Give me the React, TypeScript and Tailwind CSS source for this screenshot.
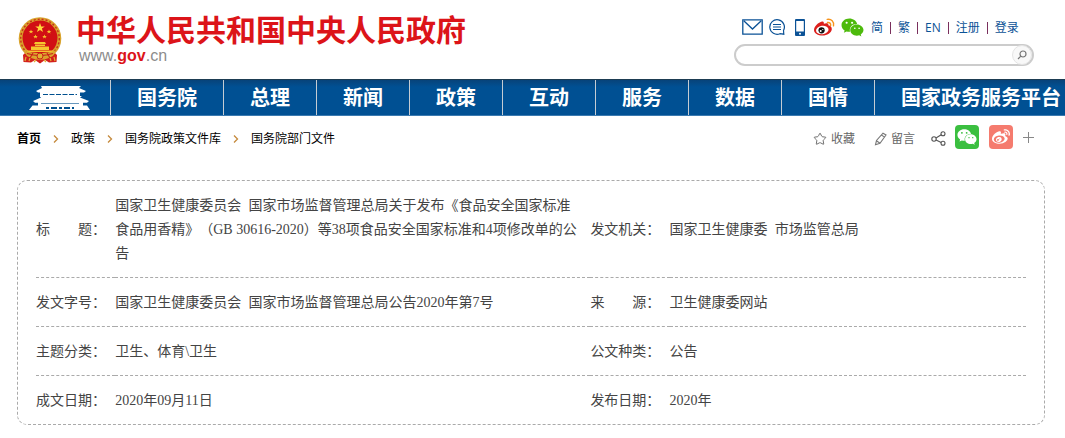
import { FaWeixin, FaWeibo } from "react-icons/fa";
import { Star } from "lucide-react";

const navItems = ["国务院", "总理", "新闻", "政策", "互动", "服务", "数据", "国情", "国家政务服务平台"];

const crumbs = ["首页", "政策", "国务院政策文件库", "国务院部门文件"];

const languageLinks = ["简", "繁", "EN", "注册", "登录"];

const rows = [
  [
    "标　　题：",
    "国家卫生健康委员会 国家市场监督管理总局关于发布《食品安全国家标准 食品用香精》（GB 30616-2020）等38项食品安全国家标准和4项修改单的公告",
    "发文机关：",
    "国家卫生健康委 市场监管总局",
  ],
  ["发文字号：", "国家卫生健康委员会 国家市场监督管理总局公告2020年第7号", "来　　源：", "卫生健康委网站"],
  ["主题分类：", "卫生、体育\\卫生", "公文种类：", "公告"],
  ["成文日期：", "2020年09月11日", "发布日期：", "2020年"],
];

// Digits and Latin runs are half an em wide, and a lone space is kept as wide as a digit
const MixedText = ({ text }: { text: string }) => (
  <>
    {text.split(/([\x20-\x7e]+)/).map((part, i) => {
      if (i % 2 === 0) return part;
      return (
        <span
          key={i}
          className={
            part === " "
              ? "font-['Liberation_Mono',monospace] text-xs leading-none"
              : "font-['Liberation_Serif',serif] leading-none"
          }
        >
          {part}
        </span>
      );
    })}
  </>
);

const Emblem = () => (
  <svg viewBox="0 0 44 47" className="h-[47px] w-11" aria-hidden="true">
    <path d="M9 34 L5 38 L5.500 45 L13 45.500 L17 43 L22 46.500 L27 43 L31 45.500 L38.500 45 L39 38 L35 34Z" fill="#d3201b" />
    <circle cx="22" cy="21.5" r="21.300" fill="#d9a32c" />
    <circle cx="22" cy="21.5" r="19.300" fill="none" stroke="#c8321c" strokeWidth="1.4" strokeDasharray="2 2" />
    <circle cx="22" cy="21" r="17.500" fill="#d10f14" />
    <path d="M22 6l1.2 3.4h3.6l-2.9 2.2 1.1 3.5-3-2.1-3 2.1 1.1-3.5-2.9-2.2h3.6z" fill="#ffd83a" />
    <g fill="#f6c52f">
      <path d="M13 12.5l.6 1.5h1.7l-1.3 1 .5 1.6-1.5-1-1.5 1 .5-1.6-1.3-1h1.7zM31 12.5l.6 1.5h1.7l-1.3 1 .5 1.6-1.5-1-1.5 1 .5-1.6-1.3-1h1.7z" />
      <path d="M17.5 17.5l.6 1.5h1.7l-1.3 1 .5 1.6-1.5-1-1.5 1 .5-1.6-1.3-1h1.7zM26.5 17.5l.6 1.5h1.7l-1.3 1 .5 1.6-1.5-1-1.5 1 .5-1.6-1.3-1h1.7z" />
      <path d="M17 25h10l1 2H16zM17 27.5h10v1.5H17zM13 29.500h18v3.500H13zM9 33.500h26v1.500H9z" />
    </g>
    <path d="M6 33c6 4 26 4 32 0l-3 6c-6 3-20 3-26 0z" fill="#dba62e" />
    <path d="M9 36.500c8 2.500 18 2.500 26 0M15 36l-3 5M29 36l3 5" stroke="#c8241a" strokeWidth="1.2" fill="none" />
    <circle cx="22" cy="39" r="3" fill="#e3b032" stroke="#c8241a" />
    <path d="M8 40l-1 4M12 41l-1 3M36 40l1 4M32 41l1 3M18 43l-2 2M26 43l2 2" stroke="#e3b032" strokeWidth="1.2" />
  </svg>
);

const Tiananmen = () => (
  <svg viewBox="0 0 62 26" className="h-[26px] w-[62px]" aria-hidden="true">
    <g fill="#fff">
      <path d="M12 1h40l-2 2 7 3-2 1.500H9L7 6l6-3z" />
      <path d="M11 7h40v5H11z" />
      <path d="M11 11h42l-2 1.500 9 3.500-2 1.800H6L4 16l8-3.500z" />
      <path d="M9 17h45v3.500h4L61 25H0l3.500-4.500H9z" />
    </g>
    <g stroke="#00508f">
      <path d="M14 9.500h34" strokeDasharray="5 1.500" />
      <path d="M12 18.500h38" strokeWidth=".6" />
      <path d="M17 23h28" strokeWidth="2" strokeDasharray="3 2 6 2" />
    </g>
  </svg>
);

const MailIcon = () => (
  <svg viewBox="0 0 21 16" className="h-4 w-[21px]" fill="none" stroke="#0b5296" strokeWidth="1.3">
    <path d="M.8.8h19.4v14.4H.8zM2 2l8.5 8L19 2" />
  </svg>
);

const ChatIcon = () => (
  <svg viewBox="0 0 16 16" className="size-4" fill="none" stroke="#0b5296" strokeWidth="1.2">
    <path d="M14.5 11.5A7.3 7.3 0 1 0 11 14.7l3.8.5z" />
    <path d="M4 5.5h8M4 8h8M4 10.5h8" />
  </svg>
);

const PhoneIcon = () => (
  <svg viewBox="0 0 10 17" className="h-[17px] w-2.5">
    <rect width="10" height="17" rx="1" fill="#0b5296" />
    <path d="M1.2 2h7.6v10.5H1.2z" fill="#fff" />
    <circle cx="5" cy="14.7" r="1" fill="#fff" />
  </svg>
);

const WeiboColorIcon = () => (
  <svg viewBox="0 0 21 18" className="h-[18px] w-[21px]">
    <path d="M8 3.5c1.5-.4 2.2.6 1.8 2.3 2-.8 5-1 4.6 1.5 2 .5 3.6 1.7 3.4 3.9-.3 3.5-4.600 6.300-9.300 6.300C4 17.500 0 15.500 0 12 0 8.500 4.500 4.300 8 3.500z" fill="#dc1f1c" />
    <ellipse cx="8.300" cy="12" rx="6.300" ry="4.200" fill="#fff" transform="rotate(-8 8.300 12)" />
    <circle cx="7.600" cy="12.300" r="3.100" fill="#111" />
    <circle cx="6.700" cy="13" r="1" fill="#fff" />
    <circle cx="8.800" cy="11.500" r=".6" fill="#fff" />
    <path d="M13.500 4.500c2-.4 3.600 1 3.100 3.200M13.200 1.400c4-.8 7.200 2.200 6.300 6.500" fill="none" stroke="#f7941d" strokeWidth="1.400" strokeLinecap="round" />
  </svg>
);

const PencilIcon = () => (
  <svg viewBox="0 0 13 14" className="h-3.5 w-[13px]" fill="none" stroke="#777" strokeWidth="1.100">
    <path d="M9 1.200l3 1.800-6 8.200-4.500 1.500 1-4.200zM7.300 3l3 1.900M2.800 9l3.200 2.200" />
  </svg>
);

const ShareIcon = () => (
  <svg viewBox="0 0 15 15" className="size-[15px]" fill="none" stroke="#555" strokeWidth="1.100">
    <circle cx="3" cy="8" r="2.200" />
    <circle cx="12" cy="2.800" r="2" />
    <circle cx="12" cy="12.200" r="2" />
    <path d="M5 7l5.200-3.200M5 9l5.200 2.400" />
  </svg>
);

const Header = () => (
  <header className="flex h-[79px] justify-between pr-[31px] pl-[18px]">
    <a href="#" className="flex gap-3.5 pt-[17px]">
      <Emblem />
      <div className="-mt-1">
        <h1 className="text-[30px] leading-[34px] font-bold text-[#dc1419]">中华人民共和国中央人民政府</h1>
        <p className="pl-[3px] font-['Liberation_Sans',sans-serif] text-base leading-[18px] text-[#8c8c8c]">
          www.<span className="font-bold text-[#dc1419]">gov</span>.cn
        </p>
      </div>
    </a>
    <div className="pt-[17px]">
      <div className="flex h-5 items-center pl-2 text-xs text-[#0b5296]">
        <a href="#" aria-label="邮箱"><MailIcon /></a>
        <a href="#" aria-label="互动" className="ml-1.5"><ChatIcon /></a>
        <a href="#" aria-label="客户端" className="ml-2.5"><PhoneIcon /></a>
        <a href="#" aria-label="微博" className="ml-[9px]"><WeiboColorIcon /></a>
        <a href="#" aria-label="微信" className="mr-[7px] ml-1.5"><FaWeixin size={23} color="#4dba0c" /></a>
        {languageLinks.map((label, i) => (
          <span key={label} className="flex items-center pt-0.5">
            {i > 0 && <span className="mx-[7px] h-3 w-px bg-[#7a2f5c]" />}
            <a href="#">{label}</a>
          </span>
        ))}
      </div>
      <form className="mt-[7px] flex h-[22px] w-[300px] items-center rounded-full border-2 border-[#ccc]">
        <input type="text" aria-label="搜索" className="min-w-0 flex-1 bg-transparent px-3 text-xs outline-none" />
        <button type="button" aria-label="搜索" className="flex size-5 items-center justify-center rounded-full border border-[#e4e4e4] bg-[#f8f8f8]">
          <svg viewBox="0 0 10 10" className="size-2.5" fill="none" stroke="#777" strokeWidth="1.200">
            <circle cx="6" cy="4" r="3" />
            <path d="M3.800 6.200L1 9" />
          </svg>
        </button>
      </form>
    </div>
  </header>
);

const Nav = () => (
  <nav className="flex h-[37px] overflow-hidden border-t border-b border-t-[#1d3c52] border-b-[#3b7ab0] bg-[#005093] bg-linear-to-b from-[#07437a] to-[#005093] to-20%">
    <a href="#" aria-label="首页" className="flex w-[110px] shrink-0 items-center pl-[29px]">
      <Tiananmen />
    </a>
    {navItems.map((item) => (
      <a key={item} href="#" className="shrink-0 border-l border-[#c5ccd3] px-[26px] text-xl leading-[35px] font-bold text-white">
        {item}
      </a>
    ))}
  </nav>
);

const Toolbar = () => (
  <div className="flex items-center justify-between pt-[9px] pr-[31px] pl-[17px] text-xs">
    <div className="flex items-center pt-[3px] text-black">
      {crumbs.map((crumb, i) => (
        <span key={crumb} className="flex items-center">
          {i > 0 && (
            <svg viewBox="0 0 6 8" className="mx-3 h-2 w-1.5" fill="none" stroke="#c58a3c" strokeWidth="1.300">
              <path d="M1 .5L4.500 4 1 7.500" />
            </svg>
          )}
          <a href="#" className={i === 0 ? "font-bold" : ""}>{crumb}</a>
        </span>
      ))}
    </div>
    <div className="flex items-center text-[#666]">
      <div className="flex items-center pt-[3px]">
        <a href="#" className="flex items-center gap-1"><Star size={14} strokeWidth={1.600} />收藏</a>
        <a href="#" className="ml-[19px] flex items-center gap-1"><PencilIcon />留言</a>
        <a href="#" aria-label="分享" className="ml-4"><ShareIcon /></a>
      </div>
      <a href="#" aria-label="微信" className="ml-[9px] flex size-6 items-center justify-center rounded-sm bg-[#3bbf40] text-white"><FaWeixin size={20} /></a>
      <a href="#" aria-label="微博" className="ml-2.5 flex size-6 items-center justify-center rounded-sm bg-[#f57b6e] text-white"><FaWeibo size={18} /></a>
      <button type="button" aria-label="更多" className="ml-2.5">
        <svg viewBox="0 0 11 11" className="size-[11px]" stroke="#888"><path d="M5.500 0v11M0 5.500h11" /></svg>
      </button>
    </div>
  </div>
);

const DocumentInfo = () => (
  <section className="mt-[31px] mr-5 ml-[17px] rounded-[10px] border border-dashed border-[#aaa] px-[18px]">
    <table className="w-full table-fixed border-collapse text-sm leading-6 text-[#444] [text-spacing-trim:space-all]">
      <colgroup>
        <col className="w-[8%]" />
        <col className="w-[48%]" />
        <col className="w-[8%]" />
        <col />
      </colgroup>
      <tbody>
        {rows.map((row) => (
          <tr key={row[0]} className="border-b border-dashed border-[#aaa] last:border-b-0">
            {row.map((cell, i) =>
              i % 2 === 0 ? (
                <th key={i} scope="row" className="py-3 text-left font-normal whitespace-nowrap">{cell}</th>
              ) : (
                <td key={i} className="py-3"><MixedText text={cell} /></td>
              )
            )}
          </tr>
        ))}
      </tbody>
    </table>
  </section>
);

export default function App() {
  return (
    <div className="overflow-hidden bg-white pb-3 font-['Open_Sans','Noto_Sans_CJK_SC',sans-serif]">
      <Header />
      <Nav />
      <Toolbar />
      <DocumentInfo />
    </div>
  );
}
